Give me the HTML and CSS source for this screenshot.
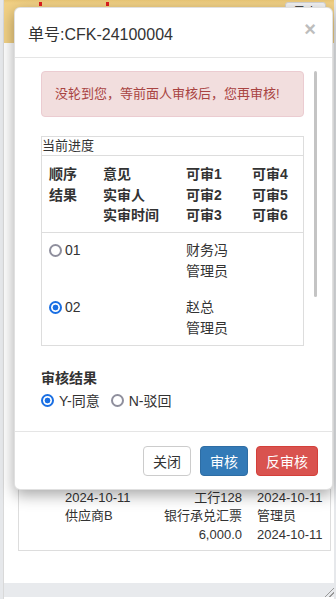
FILE: index.html
```html
<!DOCTYPE html>
<html lang="zh-CN">
<head>
<meta charset="utf-8">
<title>审核</title>
<link rel="stylesheet" href="styles.css">
</head>
<body>
<div class="page">
  <div class="topbar">
    <span class="mark m1"></span>
    <span class="mark m2"></span>
    <span class="tb-btn">导出</span>
  </div>
  <div class="content">
    <div class="grid-box">
      <div class="grow"><span></span><span>2024-10-11</span><span class="r">工行128</span><span>2024-10-11</span></div>
      <div class="grow"><span></span><span>供应商B</span><span class="r">银行承兑汇票</span><span>管理员</span></div>
      <div class="grow"><span></span><span></span><span class="r">6,000.0</span><span>2024-10-11</span></div>
    </div>
  </div>
  <div class="hbar"><span class="grip"></span></div>
</div>

<div class="modal">
  <div class="modal-header">
    <h4 class="modal-title">单号:CFK-24100004</h4>
    <span class="close">×</span>
  </div>
  <div class="modal-body">
    <div class="alert">没轮到您，等前面人审核后，您再审核!</div>
    <div class="progress">
      <div class="caption">当前进度</div>
      <div class="phead">
        <span>顺序</span><span>意见</span><span>可审1</span><span>可审4</span>
        <span>结果</span><span>实审人</span><span>可审2</span><span>可审5</span>
        <span></span><span>实审时间</span><span>可审3</span><span>可审6</span>
      </div>
      <div class="pbody">
        <div class="prow">
          <label class="seq"><input type="radio" name="seq">01</label><span></span><span>财务冯</span><span></span>
          <span></span><span></span><span>管理员</span><span></span>
        </div>
        <div class="prow">
          <label class="seq"><input type="radio" name="seq" checked>02</label><span></span><span>赵总</span><span></span>
          <span></span><span></span><span>管理员</span><span></span>
        </div>
      </div>
    </div>
    <div class="result-title">审核结果</div>
    <div class="result-opts">
      <label class="opt"><input type="radio" name="res" checked>Y-同意</label>
      <label class="opt"><input type="radio" name="res">N-驳回</label>
    </div>
    <span class="thumb"></span>
  </div>
  <div class="modal-footer">
    <button class="btn btn-default">关闭</button>
    <button class="btn btn-primary">审核</button>
    <button class="btn btn-danger">反审核</button>
  </div>
</div>
</body>
</html>
```
FILE: styles.css
```css
* { box-sizing: border-box; }
html, body { margin: 0; padding: 0; }
body {
  font-family: "Liberation Sans", "Noto Sans CJK SC", sans-serif;
  color: #333;
  background: #e6e8eb;
  width: 336px;
  height: 599px;
  overflow: hidden;
}
.page {
  height: 599px;
  margin-left: 3px;
  margin-right: 2px;
  background: #fff;
  display: flex;
  flex-direction: column;
  border-left: 1px solid #d9d9d9;
}
.topbar {
  height: 43px;
  background: linear-gradient(#e9c676 0, #f2d185 3px, #f2d185 100%);
  display: flex;
  align-items: flex-start;
  flex-shrink: 0;
}
.mark {
  width: 3px;
  height: 4px;
  background: #e02020;
  margin-top: 2px;
}
.m1 { margin-left: 35px; }
.m2 { margin-left: 64px; }
.tb-btn {
  margin-left: auto;
  margin-right: 8px;
  margin-top: 2px;
  width: 41px;
  height: 22px;
  border: 1px solid #d4d4d4;
  border-radius: 3px;
  background: #f4f4f4;
  font-size: 12px;
  line-height: 20px;
  text-align: center;
  color: #222;
}
.content {
  flex: 1;
  display: flex;
  flex-direction: column;
  justify-content: flex-end;
  padding: 0 3px 32px 14px;
}
.grid-box {
  border: 1px solid #ddd;
  border-top: none;
  padding: 0 0 6px;
  font-size: 13px;
}
.grow {
  display: grid;
  grid-template-columns: 46px 95px 82px 1fr;
  line-height: 18.5px;
  white-space: nowrap;
}
.grow span:last-child { padding-left: 15px; }
.grow .r { text-align: right; }
.hbar {
  height: 14px;
  background: #e8eaed;
  flex-shrink: 0;
  margin-bottom: 2px;
  position: relative;
}
.grip {
  position: absolute;
  right: 0;
  bottom: 0;
  width: 9px;
  height: 9px;
  background: linear-gradient(135deg, transparent 45%, #999 45%, #999 55%, transparent 55%, transparent 70%, #999 70%, #999 80%, transparent 80%);
}

.modal {
  position: absolute;
  left: 14px;
  top: 7px;
  width: 319px;
  height: 483px;
  background: #fff;
  border-radius: 6px;
  border: 1px solid rgba(0,0,0,.12);
  box-shadow: 0 5px 15px rgba(0,0,0,.35);
  display: flex;
  flex-direction: column;
}
.modal-header {
  height: 50px;
  border-bottom: 1px solid #e5e5e5;
  display: flex;
  align-items: center;
  padding: 0 16px 0 13px;
  flex-shrink: 0;
}
.modal-title {
  margin: 0;
  font-weight: normal;
  font-size: 16px;
  color: #333;
}
.close {
  margin-left: auto;
  font-size: 20px;
  font-weight: bold;
  color: #bdbdbd;
  line-height: 1;
  margin-top: -7px;
}
.modal-body {
  height: 373px;
  position: relative;
  padding: 13px 28px 0 26px;
  flex-shrink: 0;
}
.thumb {
  position: absolute;
  left: 299px;
  top: 13px;
  width: 3px;
  height: 226px;
  background: #c4c4c4;
  border-radius: 2px;
}
.alert {
  height: 46px;
  background: #f2dede;
  border: 1px solid #ebccd1;
  border-radius: 4px;
  color: #a94442;
  font-size: 13px;
  line-height: 44px;
  padding: 0 13px;
  margin-bottom: 19px;
}
.progress {
  border: 1px solid #ddd;
  font-size: 14px;
}
.caption {
  font-size: 13px;
  line-height: 18px;
  border-bottom: 1px solid #ddd;
}
.phead {
  display: grid;
  grid-template-columns: 54px 83px 66px 1fr;
  line-height: 20.5px;
  font-weight: bold;
  padding: 8px 7px 6px;
  border-bottom: 1px solid #ddd;
  white-space: nowrap;
}
.pbody {
  padding: 7px 7px 6px;
  display: flex;
  flex-direction: column;
  gap: 15px;
}
.prow {
  display: grid;
  grid-template-columns: 54px 83px 66px 1fr;
  line-height: 21px;
  white-space: nowrap;
}
.seq {
  display: flex;
  align-items: center;
}
input[type="radio"] {
  -webkit-appearance: none;
  appearance: none;
  margin: 0 3px 0 0;
  width: 13px;
  height: 13px;
  border: 2px solid #8f8f9d;
  border-radius: 50%;
  background: #fff;
  flex-shrink: 0;
}
input[type="radio"]:checked {
  border-color: #1a6fe3;
  background: radial-gradient(circle, #1a6fe3 0, #1a6fe3 2.6px, #fff 3.2px);
}
.result-title {
  margin-top: 22px;
  font-weight: bold;
  font-size: 14px;
  line-height: 20px;
}
.result-opts {
  margin-top: 3px;
  display: flex;
  gap: 11px;
  font-size: 14px;
  line-height: 20px;
}
.opt {
  display: flex;
  align-items: center;
}
.opt input[type="radio"] { margin-right: 5px; }
.modal-footer {
  border-top: 1px solid #e5e5e5;
  padding: 14px 14px 0;
  display: flex;
  justify-content: flex-end;
  gap: 8px;
}
.btn {
  height: 30px;
  padding: 0 9px;
  font-family: inherit;
  font-size: 14px;
  border-radius: 4px;
  border: 1px solid #ccc;
  background: #fff;
  color: #333;
}
.btn-default { margin-right: 1px; }
.btn-primary { background: #337ab7; border-color: #2e6da4; color: #fff; }
.btn-danger { background: #d9534f; border-color: #d43f3a; color: #fff; }
```
